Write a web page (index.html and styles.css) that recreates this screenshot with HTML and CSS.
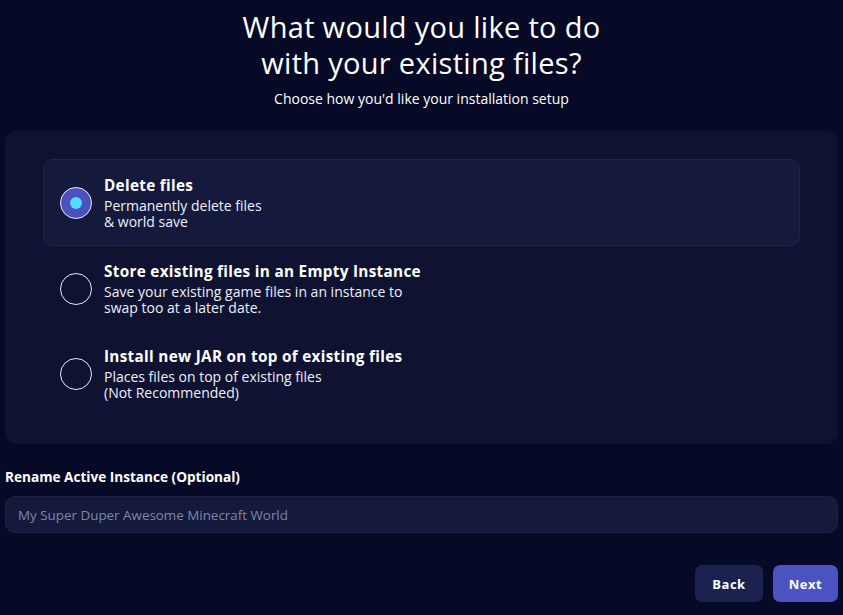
FILE: index.html
```html
<!DOCTYPE html>
<html>
<head>
<meta charset="utf-8">
<link rel="stylesheet" href="styles.css">
</head>
<body>
<div class="page">
  <header class="head">
    <h1 class="title">What would you like to do<br>with your existing files?</h1>
    <p class="subtitle">Choose how you'd like your installation setup</p>
  </header>
  <section class="panel">
    <div class="option selected">
      <span class="radio"><span class="dot"></span></span>
      <div class="opt-text">
        <div class="opt-title">Delete files</div>
        <div class="opt-desc"><div>Permanently delete files</div><div>&amp; world save</div></div>
      </div>
    </div>
    <div class="option">
      <span class="radio"></span>
      <div class="opt-text">
        <div class="opt-title">Store existing files in an Empty Instance</div>
        <div class="opt-desc"><div>Save your existing game files in an instance to</div><div>swap too at a later date.</div></div>
      </div>
    </div>
    <div class="option">
      <span class="radio"></span>
      <div class="opt-text">
        <div class="opt-title">Install new JAR on top of existing files</div>
        <div class="opt-desc"><div>Places files on top of existing files</div><div>(Not Recommended)</div></div>
      </div>
    </div>
  </section>
  <label class="field-label">Rename Active Instance (Optional)</label>
  <div class="input">My Super Duper Awesome Minecraft World</div>
  <div class="actions">
    <button class="btn btn-back">Back</button>
    <button class="btn btn-next">Next</button>
  </div>
</div>
</body>
</html>
```

FILE: styles.css
```css
* { box-sizing: border-box; }
html, body {
  margin: 0;
  padding: 0;
  background: #060a26;
  color: #ffffff;
  font-family: "Open Sans", "Noto Sans", sans-serif;
}
.page {
  width: 843px;
  height: 615px;
  padding: 9px 5px 0 5px;
  display: flex;
  flex-direction: column;
}
.head {
  text-align: center;
}
.title {
  margin: 0;
  font-size: 29px;
  line-height: 36px;
  font-weight: 500;
  letter-spacing: 0.3px;
}
.subtitle {
  margin: 10px 0 0 0;
  font-size: 14px;
  line-height: 16px;
  font-weight: 500;
}
.panel {
  margin-top: 24px;
  background: #0f1331;
  border-radius: 12px;
  padding: 28px 38px;
  display: flex;
  flex-direction: column;
}
.option {
  height: 87px;
  display: flex;
  align-items: center;
  gap: 12px;
  padding: 0 16px;
  border-radius: 10px;
  border: 1px solid transparent;
}
.option + .option { height: 85px; }
.option.selected {
  background: #151a3d;
  border-color: #1e2550;
}
.radio {
  width: 32px;
  height: 32px;
  flex: 0 0 32px;
  border-radius: 50%;
  border: 1.5px solid #e8eaf4;
  display: flex;
  align-items: center;
  justify-content: center;
}
.selected .radio {
  background: #4a50bf;
}
.dot {
  width: 12px;
  height: 12px;
  border-radius: 50%;
  background: #52dcff;
}
.opt-title {
  font-size: 15.3px;
  line-height: 20px;
  font-weight: 700;
  letter-spacing: 0.3px;
  margin-bottom: 3px;
}
.opt-desc {
  font-size: 14px;
  line-height: 16px;
  color: #eef0f8;
}
.field-label {
  margin-top: 25px;
  font-size: 13.6px;
  line-height: 16px;
  font-weight: 700;
}
.input {
  margin-top: 11px;
  height: 37px;
  border-radius: 10px;
  background: #151a3d;
  border: 1px solid #1c2249;
  padding: 0 12px;
  display: flex;
  align-items: center;
  font-size: 13.4px;
  color: #7e86a8;
}
.actions {
  margin-top: 32px;
  display: flex;
  justify-content: flex-end;
  gap: 10px;
}
.btn {
  height: 37px;
  border: none;
  border-radius: 7px;
  color: #ffffff;
  font-family: inherit;
  font-size: 13px;
  font-weight: 700;
  letter-spacing: 0.5px;
}
.btn-back {
  width: 68px;
  background: #1c2250;
}
.btn-next {
  width: 65px;
  background: #4a53bf;
}
```
